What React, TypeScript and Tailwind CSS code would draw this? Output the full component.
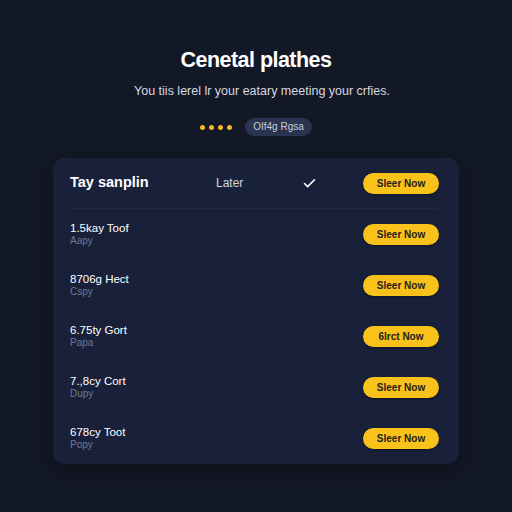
import { Check } from 'lucide-react';

const rows = [
  { title: '1.5kay Toof', sub: 'Aapy', cta: 'Sleer Now' },
  { title: '8706g Hect', sub: 'Cspy', cta: 'Sleer Now' },
  { title: '6.75ty Gort', sub: 'Papa', cta: '6lrct Now' },
  { title: '7.,8cy Cort', sub: 'Dupy', cta: 'Sleer Now' },
  { title: '678cy Toot', sub: 'Popy', cta: 'Sleer Now' },
];

function CtaButton({ label }: { label: string }) {
  return (
    <button className="ml-auto h-[21px] w-[76px] rounded-full bg-[#f9c21a] text-[10px] font-semibold text-[#24201a] shadow-[0_1px_3px_rgba(0,0,0,0.4)]">
      {label}
    </button>
  );
}

export default function App() {
  return (
    <div
      className="flex h-[512px] w-[512px] flex-col items-center bg-[#131826] text-white"
      style={{ fontFamily: '"Liberation Sans", Arial, sans-serif' }}
    >
      <h1 className="mt-[46px] text-[21.5px] font-bold leading-[28px] tracking-tight text-white">
        Cenetal plathes
      </h1>
      <p className="ml-[12px] mt-[9px] text-[12.5px] leading-4 text-[#d6d9e0]">
        You tiis lerel lr your eatary meeting your crfies.
      </p>

      <div className="mt-[19px] flex items-center gap-[13px]">
        <div className="flex gap-[4px]">
          <span className="h-[5px] w-[5px] rounded-full bg-[#f6b92a]" />
          <span className="h-[5px] w-[5px] rounded-full bg-[#f6b92a]" />
          <span className="h-[5px] w-[5px] rounded-full bg-[#f6b92a]" />
          <span className="h-[5px] w-[5px] rounded-full bg-[#f6b92a]" />
        </div>
        <span className="rounded-full bg-[#2a3450] px-[8px] py-[2px] text-[10px] leading-[14px] text-[#c7ccd8]">
          OIf4g Rgsa
        </span>
      </div>

      {/* Plans card */}
      <div className="mt-[22px] w-[406px] rounded-[12px] bg-[#19213a] pl-[17px] pr-[20px] shadow-[0_6px_20px_rgba(0,0,0,0.35)]">
        <div className="flex h-[51px] items-center border-b border-[#1f2942]">
          <span className="w-[146px] text-[14.5px] font-bold text-white">Tay sanplin</span>
          <span className="w-[86px] text-[12px] text-[#d3d7df]">Later</span>
          <Check className="h-[15px] w-[15px] text-white" strokeWidth={2.5} />
          <CtaButton label="Sleer Now" />
        </div>

        {rows.map((r) => (
          <div key={r.title} className="flex h-[51px] items-center">
            <div className="flex flex-col">
              <span className="text-[11.5px] leading-[13px] text-white">{r.title}</span>
              <span className="text-[10px] leading-[12px] text-[#6e7891]">{r.sub}</span>
            </div>
            <CtaButton label={r.cta} />
          </div>
        ))}
      </div>
    </div>
  );
}
